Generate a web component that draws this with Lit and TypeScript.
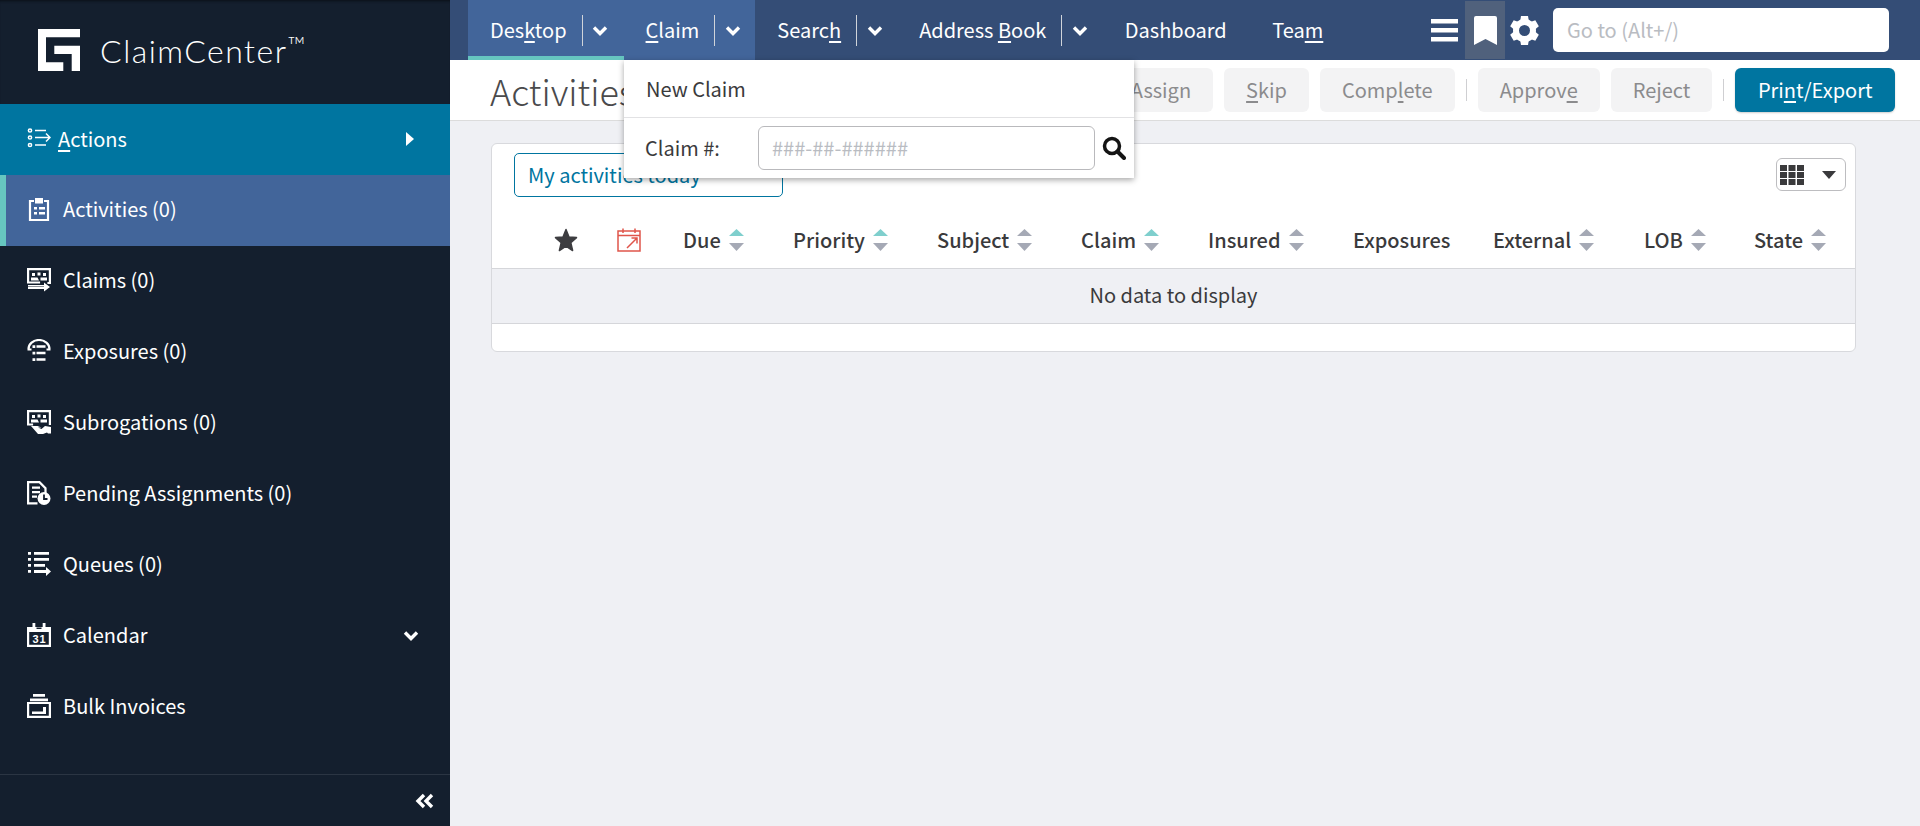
import { LitElement, html, css, svg } from 'lit';
import { customElement } from 'lit/decorators.js';

// icons are all drawn on a 24x24 box, white on the dark sidebar
const icons: Record<string, unknown> = {
  actions: svg`<g fill="none" stroke="#fff" stroke-width="1.5"><circle cx="3" cy="3.500" r="1.600"/><circle cx="3" cy="10.500" r="1.600"/><circle cx="3" cy="18" r="1.600"/><path d="M8 3.500h11M8 10.500h15M19 6.500l4 4-4 4M8 18h11"/></g>`,
  activities: svg`<g fill="none" stroke="#fff" stroke-width="2.200"><path d="M7 4H3v19h18V4H17"/></g><path fill="#fff" d="M8 1h8v5.500H8zM7 10h3v2.500H7zM12 10h6v2.500h-6zM7 15h3v2.500H7zM12 15h6v2.500h-6z"/>`,
  claims: svg`<g fill="none" stroke="#fff" stroke-width="2.200"><path d="M1.100 15.500V1.100h21.800V15h-2.500M1.100 14.500h12"/></g><path fill="#fff" d="M5 5h3v3H5zM10.500 4.500h3v3h-3zM16 5h3v3h-3zM4 9.500h6.500l1.500 3H4zM13.500 9.500H20v3h-6.500zM1 17h16v-2.500L23 19l-6 4.500V21H1v-2h16v-.5H1z"/>`,
  exposures: svg`<g fill="none" stroke="#fff" stroke-width="2.200"><path d="M1.500 10a10.500 9 0 0 1 21 0M.5 10.500h4M19.500 10.500h4"/><path d="M9.500 7.500h9M9.500 14h9M9.500 20.500h9" stroke-width="2.600"/></g><path fill="#fff" d="M5.500 6.200h2.800V9H5.500zM5.500 12.700h2.800v2.800H5.500zM5.500 19.200h2.800V22H5.500z"/>`,
  subrogations: svg`<g fill="none" stroke="#fff" stroke-width="2.200"><path d="M1.100 15.500V1.100h21.800V15M1.100 14.500h5"/></g><path fill="#fff" d="M5 5h3v3H5zM10.500 4.500h3v3h-3zM16 5h3v3h-3zM4 9.500h6.500l1.500 3H4zM13.500 9.500H20v3h-6.500zM4 16h6.500l4 1.500H11l3.500 1.500 3.500-3 6 1v6.500h-3l-1-1-4 1.500h-5z"/>`,
  pending: svg`<path fill="none" stroke="#fff" stroke-width="2.200" d="M10.500 22.400H1.100V1.100h11.400l6 6v5"/><path fill="#fff" d="M5 5.500h8v2.200H5zM5 10h8v2.200H5zM5 14.500h5v2.200H5z"/><circle cx="17" cy="17.500" r="6.500" fill="#fff"/><path fill="none" stroke="#141f2e" stroke-width="1.800" d="M17 13.500v4.500h3.500"/>`,
  queues: svg`<path fill="#fff" d="M1 0h3v2.800H1zM7 0h15v2.800H7zM1 6h3v2.800H1zM7 6h15v2.800H7zM1 12h3v2.800H1zM7 12h11v2.800H7zM1 18h3v2.800H1zM7 18h12v-3l5 4.500-5 4.500v-3H7z"/>`,
  calendar: svg`<g fill="none" stroke="#fff" stroke-width="2.200"><path d="M1.100 5h21.800v17.900H1.100z"/></g><path fill="#fff" d="M1 4h22v5H1zM5.500 0h2.800v5H5.500zM15.700 0h2.800v5h-2.800z"/><path fill="#141f2e" d="M9.500 4.500h5v1.500h-5z"/><text x="5.500" y="20" font-size="11" font-weight="700" fill="#fff" font-family="Liberation Sans, sans-serif" textLength="13">31</text>`,
  invoices: svg`<g fill="none" stroke="#fff" stroke-width="2.200"><path d="M1.100 9h21.800v13.900H1.100z"/></g><path fill="#fff" d="M6 0h12v2.800H6zM3 4.500h18v2.800H3zM5 17.500h11V13h3v7H5z"/>`,
};

const navItems = [
  { icon: 'activities', label: 'Activities (0)', active: true },
  { icon: 'claims', label: 'Claims (0)' },
  { icon: 'exposures', label: 'Exposures (0)' },
  { icon: 'subrogations', label: 'Subrogations (0)' },
  { icon: 'pending', label: 'Pending Assignments (0)' },
  { icon: 'queues', label: 'Queues (0)' },
  { icon: 'calendar', label: 'Calendar', more: true },
  { icon: 'invoices', label: 'Bulk Invoices' },
];

// columns: label, sortable, first arrow teal or not
const columns = [
  { label: 'Due', sort: 'on' },
  { label: 'Priority', sort: 'on' },
  { label: 'Subject', sort: 'off' },
  { label: 'Claim', sort: 'on' },
  { label: 'Insured', sort: 'off' },
  { label: 'Exposures', sort: '' },
  { label: 'External', sort: 'off' },
  { label: 'LOB', sort: 'off' },
  { label: 'State', sort: 'off' },
];

const chevron = html`<svg class="chevron" viewBox="0 0 16 11"><path d="M2 2.500l6 6 6-6" fill="none" stroke="#fff" stroke-width="3.400"/></svg>`;

// small helper so accelerator letters stay readable in the templates
const key = (before: string, letter: string, after: string) => html`${before}<u>${letter}</u>${after}`;

@customElement('app-root')
export class AppRoot extends LitElement {
  static styles = css`
    :host {
      display: flex;
      width: 100%;
      height: 826px;
      overflow: hidden;
      background: #eff0f4;
      color: #3a3a3c;
      font-family: "Noto Sans CJK SC", "Source Sans Pro", sans-serif;
      font-size: 20px;
      line-height: 26px;
    }
    u { text-underline-offset: 3px; text-decoration-thickness: 2px; }
    svg { display: block; flex: none; }

    /* sidebar */
    .sidebar {
      width: 450px;
      flex: none;
      height: 826px;
      background: #141f2e;
      color: #fff;
      display: flex;
      flex-direction: column;
    }
    .brand {
      height: 104px;
      flex: none;
      display: flex;
      align-items: flex-start;
      gap: 20px;
      padding: 29px 0 0 38px;
      box-sizing: border-box;
      box-shadow: inset 0 3px 3px -2px #0a0f17;
    }
    .logo { width: 42px; height: 42px; }
    .brand-name {
      font-family: Lato, sans-serif;
      font-weight: 300;
      font-size: 32px;
      line-height: 40px;
      letter-spacing: 1.500px;
      margin-top: 2px;
    }
    .brand-name sup { font-size: 24px; line-height: 0; vertical-align: 9px; letter-spacing: 0; }
    .row {
      height: 71px;
      flex: none;
      display: flex;
      align-items: center;
      box-sizing: border-box;
      padding: 0 0 3px 27px;
      gap: 12px;
    }
    .row svg.ic { width: 24px; height: 24px; }
    .row .trail { margin-left: auto; margin-right: 31px; }
    .row .chevron { width: 16px; height: 11px; }
    .actions { background: #0075a0; gap: 7px; padding-bottom: 2px; }
    .actions .trail { margin-right: 36px; }
    .active { background: #42659a; border-left: 6px solid #66c6c0; padding-left: 21px; }
    .side-foot {
      margin-top: auto;
      height: 51px;
      flex: none;
      border-top: 1px solid #2b3543;
      display: flex;
      align-items: center;
      justify-content: flex-end;
      padding-right: 15px;
    }

    /* main column */
    .main { flex: 1; min-width: 0; display: flex; flex-direction: column; position: relative; }
    .topbar {
      height: 60px;
      flex: none;
      background: #344d76;
      color: #fff;
      display: flex;
      align-items: stretch;
      padding-left: 18px;
      box-sizing: border-box;
    }
    .tab { display: flex; align-items: center; padding-left: 22px; }
    .tab.plain { padding: 0 23px 0 22.5px; }
    .tab.open { background: #42659a; }
    .tab.current { box-shadow: inset 0 -4px 0 #66c6c0; padding-right: 1px; }
    .tab .sep { width: 1px; height: 31px; background: #d0d4da; margin-left: 15px; }
    .tab .drop { width: 40px; display: flex; justify-content: center; padding-right: 5px; box-sizing: border-box; }
    .tab .chevron { width: 16px; height: 11px; }
    .tools { margin-left: auto; display: flex; align-items: center; padding-right: 31px; }
    .burger { width: 27px; height: 23px; margin-right: 7px; }
    .mark {
      width: 40px;
      height: 58px;
      margin-right: 5px;
      background: #50617c;
      display: flex;
      align-items: center;
      justify-content: center;
    }
    .goto {
      width: 336px;
      height: 44px;
      margin-left: 14px;
      box-sizing: border-box;
      background: #fff;
      border-radius: 5px;
      color: #b9bcc2;
      padding: 0 14px;
      display: flex;
      align-items: center;
    }

    .subbar {
      height: 61px;
      flex: none;
      box-sizing: border-box;
      background: #fff;
      border-bottom: 1px solid #dcdcdc;
      display: flex;
      align-items: center;
      padding: 0 25px 0 40px;
    }
    .title { font-size: 36px; font-weight: 300; line-height: 44px; color: #4a4a4c; }
    .buttons { margin-left: auto; display: flex; align-items: center; gap: 11px; }
    .btn {
      height: 44px;
      padding: 0 22px;
      display: flex;
      align-items: center;
      background: #f3f3f4;
      color: #8b8b8d;
      border-radius: 6px;
    }
    .btn.primary { background: #0075a0; color: #fff; padding: 0 22.5px; box-shadow: 0 1px 2px rgba(0, 0, 0, 0.2); }
    .vsep { width: 1px; height: 22px; background: #cfcfd2; }

    /* activities card */
    .content { padding: 22px 64px 0 41px; }
    .card {
      height: 209px;
      box-sizing: border-box;
      background: #fff;
      border: 1px solid #d8d9dd;
      border-radius: 6px;
      display: flex;
      flex-direction: column;
    }
    .filter-row {
      display: flex;
      justify-content: space-between;
      align-items: flex-start;
      padding: 9px 9px 0 22px;
    }
    .filter {
      width: 269px;
      height: 44px;
      box-sizing: border-box;
      border: 1px solid #0075a0;
      border-radius: 5px;
      color: #0075a0;
      padding: 0 13px;
      display: flex;
      align-items: center;
    }
    .picker {
      margin-top: 5px;
      width: 70px;
      height: 33px;
      box-sizing: border-box;
      border: 1px solid #bdbdc0;
      border-radius: 6px;
      display: flex;
      align-items: center;
      padding-left: 3px;
      gap: 18px;
    }
    .thead {
      margin-top: 12px;
      height: 59px;
      box-sizing: border-box;
      padding: 3px 0 0 62px;
      display: grid;
      grid-template-columns: 63px 66px 110px 144px 144px 127px 145px 140px 151px 110px auto;
      align-items: center;
      font-weight: 500;
      color: #3a3a3c;
    }
    .th { display: flex; align-items: center; gap: 8px; }
    .empty {
      height: 56px;
      flex: none;
      box-sizing: border-box;
      background: #eff0f4;
      border-top: 1px solid #d5d6da;
      border-bottom: 1px solid #d5d6da;
      padding-bottom: 2px;
      display: flex;
      align-items: center;
      justify-content: center;
    }

    /* claim dropdown, sits over the toolbar and card */
    .menu {
      position: absolute;
      left: 174px;
      top: 60px;
      width: 510px;
      height: 118px;
      box-sizing: border-box;
      background: #fff;
      box-shadow: 0 2px 6px rgba(0, 0, 0, 0.35);
      display: flex;
      flex-direction: column;
    }
    .menu-item { height: 57px; flex: none; display: flex; align-items: center; padding-left: 22px; border-bottom: 1px solid #e2e2e4; }
    .menu-claim { flex: 1; display: flex; align-items: center; padding-left: 21px; }
    .menu-claim label { width: 113px; }
    .claim-input {
      width: 337px;
      height: 44px;
      box-sizing: border-box;
      border: 1px solid #b9b9bc;
      border-radius: 6px;
      color: #b9bcc2;
      padding: 0 13px;
      display: flex;
      align-items: center;
    }
    .menu-claim svg { margin-left: 7px; }
  `;

  private tab(label: unknown, opts: { drop?: boolean; open?: boolean; current?: boolean } = {}) {
    const cls = `tab ${opts.drop ? '' : 'plain'} ${opts.open ? 'open' : ''} ${opts.current ? 'current' : ''}`;
    return html`<div class=${cls}>
      <span>${label}</span>
      ${opts.drop ? html`<span class="sep"></span><span class="drop">${chevron}</span>` : ''}
    </div>`;
  }

  private sortArrows(state: string) {
    if (!state) return '';
    const top = state === 'on' ? '#7fcfcd' : '#a5a9b5';
    return html`<svg width="15" height="22" viewBox="0 0 15 22">
      <path d="M7.500 0 15 7H0z" fill=${top} /><path d="M0 14h15l-7.500 8z" fill="#a5a9b5" />
    </svg>`;
  }

  render() {
    return html`
      <aside class="sidebar">
        <div class="brand">
          <svg class="logo" viewBox="0 0 42 42">
            <path fill="#fff" d="M0 0h42v8.300H8v25h17.300V42H0zM16.300 16.700H42V42h-8.300V25H16.300z" />
          </svg>
          <div class="brand-name">ClaimCenter<sup>™</sup></div>
        </div>
        <div class="row actions">
          <svg class="ic" viewBox="0 0 24 24">${icons.actions}</svg>
          <span>${key('', 'A', 'ctions')}</span>
          <svg class="trail" width="8" height="14" viewBox="0 0 8 14"><path d="M0 0l8 7-8 7z" fill="#fff" /></svg>
        </div>
        ${navItems.map(
          (n) => html`<div class="row ${n.active ? 'active' : ''}">
            <svg class="ic" viewBox="0 0 24 24">${icons[n.icon]}</svg>
            <span>${n.label}</span>
            ${n.more ? html`<span class="trail">${chevron}</span>` : ''}
          </div>`,
        )}
        <div class="side-foot">
          <svg width="20" height="16" viewBox="0 0 20 16">
            <path d="M9 2 3 8l6 6M17 2l-6 6 6 6" fill="none" stroke="#fff" stroke-width="3.400" />
          </svg>
        </div>
      </aside>

      <div class="main">
        <nav class="topbar">
          ${this.tab(key('Des', 'k', 'top'), { drop: true, open: true, current: true })}
          ${this.tab(key('', 'C', 'laim'), { drop: true, open: true })}
          ${this.tab(key('Searc', 'h', ''), { drop: true })}
          ${this.tab(key('Address ', 'B', 'ook'), { drop: true })}
          ${this.tab('Dashboard')}
          ${this.tab(key('Tea', 'm', ''))}
          <div class="tools">
            <svg class="burger" viewBox="0 0 27 23"><path fill="#fff" d="M0 0h27v4.500H0zM0 9h27v4.500H0zM0 18h27v4.500H0z" /></svg>
            <div class="mark">
              <svg width="23" height="29" viewBox="0 0 23 29"><path fill="#fff" d="M2 0h19a2 2 0 0 1 2 2v27l-11.500-6L0 29V2a2 2 0 0 1 2-2z" /></svg>
            </div>
            <svg width="29" height="29" viewBox="0 0 29 29">
              <circle cx="14.500" cy="14.500" r="8.500" fill="none" stroke="#fff" stroke-width="6" />
              <g fill="#fff">
                ${[0, 60, 120, 180, 240, 300].map(
                  (a) => svg`<path transform="rotate(${a} 14.500 14.500)" d="M11 0h7l1 6h-9z" />`,
                )}
              </g>
            </svg>
            <div class="goto">Go to (Alt+/)</div>
          </div>
        </nav>

        <div class="subbar">
          <div class="title">Activities</div>
          <div class="buttons">
            <div class="btn">Assign</div>
            <div class="btn">${key('', 'S', 'kip')}</div>
            <div class="btn">${key('Comp', 'l', 'ete')}</div>
            <span class="vsep"></span>
            <div class="btn">${key('Approv', 'e', '')}</div>
            <div class="btn">Reject</div>
            <span class="vsep"></span>
            <div class="btn primary">${key('Pri', 'n', 't/Export')}</div>
          </div>
        </div>

        <div class="content">
          <section class="card">
            <div class="filter-row">
              <div class="filter">My activities today</div>
              <div class="picker">
                <svg width="24" height="20" viewBox="0 0 24 20">
                  <path fill="#3a3a3c" d="M0 0h7v6H0zM8.500 0h7v6h-7zM17 0h7v6h-7zM0 7h7v6H0zM8.500 7h7v6h-7zM17 7h7v6h-7zM0 14h7v6H0zM8.500 14h7v6h-7zM17 14h7v6h-7z" />
                </svg>
                <svg width="14" height="8" viewBox="0 0 14 8"><path fill="#3a3a3c" d="M0 0h14L7 8z" /></svg>
              </div>
            </div>
            <div class="thead">
              <svg width="24" height="24" viewBox="0 0 24 24">
                <path fill="#3d3d40" stroke="#3d3d40" stroke-width="1.500" stroke-linejoin="round" d="M12 1.500l3 7.500 7.500.6-5.700 5 1.800 7.900L12 18.200l-6.600 4.300 1.800-7.900-5.700-5L9 9z" />
              </svg>
              <svg width="24" height="24" viewBox="0 0 24 24">
                <g fill="none" stroke="#e0554b" stroke-width="1.500">
                  <path d="M1 3h22v20H1zM1 7.500h22M6 .5V5M18 .5V5M10 20l10-10M14.500 10H20v5.500" />
                </g>
              </svg>
              ${columns.map(
                (c) => html`<div class="th"><span>${c.label}</span>${this.sortArrows(c.sort)}</div>`,
              )}
            </div>
            <div class="empty">No data to display</div>
          </section>
        </div>

        <div class="menu">
          <div class="menu-item">New Claim</div>
          <div class="menu-claim">
            <label>Claim #:</label>
            <div class="claim-input">###-##-######</div>
            <svg width="24" height="24" viewBox="0 0 24 24">
              <circle cx="10" cy="10" r="7.500" fill="none" stroke="#141414" stroke-width="3.500" />
              <path d="M15.500 15.500 22 22" stroke="#141414" stroke-width="4" stroke-linecap="round" />
            </svg>
          </div>
        </div>
      </div>
    `;
  }
}
